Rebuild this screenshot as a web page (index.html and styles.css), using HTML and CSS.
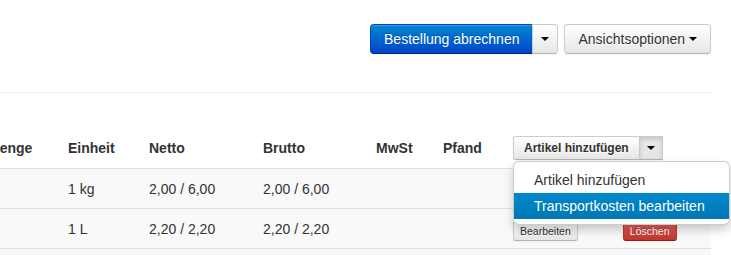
FILE: index.html
```html
<!DOCTYPE html>
<html lang="de">
<head>
  <meta charset="UTF-8" />
  <title>Bestellung</title>
  <link rel="stylesheet" href="styles.css">
</head>
<body>
  <div class="page">
    <!-- obere Aktionen -->
    <div class="toolbar">
      <div class="btn-group">
        <button class="btn btn-primary">Bestellung abrechnen</button>
        <button class="btn dropdown-toggle"><span class="caret"></span></button>
      </div>
      <div class="btn-group">
        <button class="btn">Ansichtsoptionen <span class="caret"></span></button>
      </div>
    </div>

    <hr>

    <!-- Positionen -->
    <table class="table">
      <colgroup>
        <col class="col-menge">
        <col class="col-einheit">
        <col class="col-netto">
        <col class="col-brutto">
        <col class="col-mwst">
        <col class="col-pfand">
        <col class="col-actions">
      </colgroup>
      <thead>
        <tr>
          <th>Menge</th>
          <th>Einheit</th>
          <th>Netto</th>
          <th>Brutto</th>
          <th>MwSt</th>
          <th>Pfand</th>
          <th>
            <div class="btn-group open">
              <button class="btn btn-small">Artikel hinzufügen</button>
              <button class="btn btn-small dropdown-toggle active"><span class="caret"></span></button>
              <ul class="dropdown-menu">
                <li><a href="#">Artikel hinzufügen</a></li>
                <li class="active"><a href="#">Transportkosten bearbeiten</a></li>
              </ul>
            </div>
          </th>
        </tr>
      </thead>
      <tbody>
        <tr>
          <td>1</td>
          <td>1 kg</td>
          <td>2,00 / 6,00</td>
          <td>2,00 / 6,00</td>
          <td></td>
          <td></td>
          <td>
            <div class="row-actions">
              <button class="btn btn-mini">Bearbeiten</button>
              <button class="btn btn-mini btn-danger">Löschen</button>
            </div>
          </td>
        </tr>
        <tr>
          <td>1</td>
          <td>1 L</td>
          <td>2,20 / 2,20</td>
          <td>2,20 / 2,20</td>
          <td></td>
          <td></td>
          <td>
            <div class="row-actions">
              <button class="btn btn-mini">Bearbeiten</button>
              <button class="btn btn-mini btn-danger">Löschen</button>
            </div>
          </td>
        </tr>
        <tr>
          <td>1</td>
          <td>1 St</td>
          <td>1,00 / 1,00</td>
          <td>1,00 / 1,00</td>
          <td></td>
          <td></td>
          <td></td>
        </tr>
      </tbody>
    </table>
  </div>
</body>
</html>
```

FILE: styles.css
```css
body {
  margin: 0;
  overflow: hidden;
  background: #fff;
  font-family: "Liberation Sans", Arial, sans-serif;
  font-size: 14px;
  line-height: 20px;
  color: #333;
}
.page {
  width: 711px;
}

/* === obere Leiste === */
.toolbar {
  display: flex;
  justify-content: flex-end;
  gap: 6px;
  padding-top: 24px;
}
.btn-group {
  display: flex;
  position: relative;
}
.btn-group .btn + .btn {
  margin-left: -1px;
}
.btn-group .btn:not(:last-child) {
  border-top-right-radius: 0;
  border-bottom-right-radius: 0;
}
.btn-group .btn + .btn {
  border-top-left-radius: 0;
  border-bottom-left-radius: 0;
}

/* === Buttons (Bootstrap 2 Stil) === */
.btn {
  font-family: inherit;
  font-size: 14px;
  line-height: 20px;
  padding: 4px 13px;
  color: #333;
  text-shadow: 0 1px 1px rgba(255, 255, 255, 0.75);
  background: linear-gradient(#fff, #e6e6e6);
  border: 1px solid #ccc;
  border-bottom-color: #b3b3b3;
  border-radius: 4px;
  box-shadow: inset 0 1px 0 rgba(255, 255, 255, 0.2), 0 1px 2px rgba(0, 0, 0, 0.05);
  cursor: pointer;
  white-space: nowrap;
}
.btn.active {
  background: #e6e6e6;
  box-shadow: inset 0 2px 4px rgba(0, 0, 0, 0.15), 0 1px 2px rgba(0, 0, 0, 0.05);
}
.btn-primary {
  color: #fff;
  text-shadow: 0 -1px 0 rgba(0, 0, 0, 0.25);
  background: linear-gradient(#0088cc, #0044cc);
  border-color: #0044cc #0044cc #002a80;
}
.dropdown-toggle {
  padding-left: 8px;
  padding-right: 8px;
}
.btn-small {
  font-size: 12px;
  font-weight: bold;
  line-height: 18px;
  padding: 2px 10px;
  border-radius: 3px;
}
.btn-small.dropdown-toggle {
  padding-left: 7px;
  padding-right: 7px;
}
.btn-mini {
  font-size: 10.5px;
  line-height: 18px;
  padding: 0 6px;
  border-radius: 3px;
}
.btn-danger {
  color: #fff;
  text-shadow: 0 -1px 0 rgba(0, 0, 0, 0.25);
  background: linear-gradient(#ee5f5b, #bd362f);
  border-color: #bd362f #bd362f #802420;
}
.caret {
  display: inline-block;
  width: 0;
  height: 0;
  vertical-align: middle;
  border-top: 4px solid #000;
  border-left: 4px solid transparent;
  border-right: 4px solid transparent;
  margin-top: -2px;
}

hr {
  margin: 38px 0 0;
  border: 0;
  border-top: 1px solid #eee;
  border-bottom: 1px solid #fff;
}

/* === Tabelle === */
.table {
  margin-top: 34px;
  margin-left: -20px;
  width: 731px;
  table-layout: fixed;
  border-collapse: collapse;
}
.col-menge { width: 80px; }
.col-einheit { width: 81px; }
.col-netto { width: 114px; }
.col-brutto { width: 113px; }
.col-mwst { width: 67px; }
.col-pfand { width: 70px; }
.col-actions { width: 206px; }
.table th {
  padding: 8px;
  text-align: left;
  font-weight: bold;
  vertical-align: middle;
}
.table td {
  padding: 10px 8px 9px;
  border-top: 1px solid #ddd;
  background: #f9f9f9;
  vertical-align: middle;
  white-space: nowrap;
}
.row-actions {
  display: flex;
  align-items: center;
  gap: 45px;
  padding-top: 2px;
  margin-bottom: -2px;
}

/* === Dropdown === */
.dropdown-menu {
  position: absolute;
  top: 100%;
  left: 0;
  z-index: 10;
  box-sizing: border-box;
  min-width: 217px;
  margin: 1px 0 0;
  padding: 5px 0;
  list-style: none;
  background: #fff;
  border: 1px solid rgba(0, 0, 0, 0.2);
  border-radius: 6px;
  box-shadow: 0 5px 10px rgba(0, 0, 0, 0.2);
}
.dropdown-menu a {
  display: block;
  padding: 3px 20px;
  font-weight: normal;
  line-height: 20px;
  color: #333;
  text-decoration: none;
  white-space: nowrap;
}
.dropdown-menu .active a {
  color: #fff;
  background: linear-gradient(#0088cc, #0077b3);
}
```
